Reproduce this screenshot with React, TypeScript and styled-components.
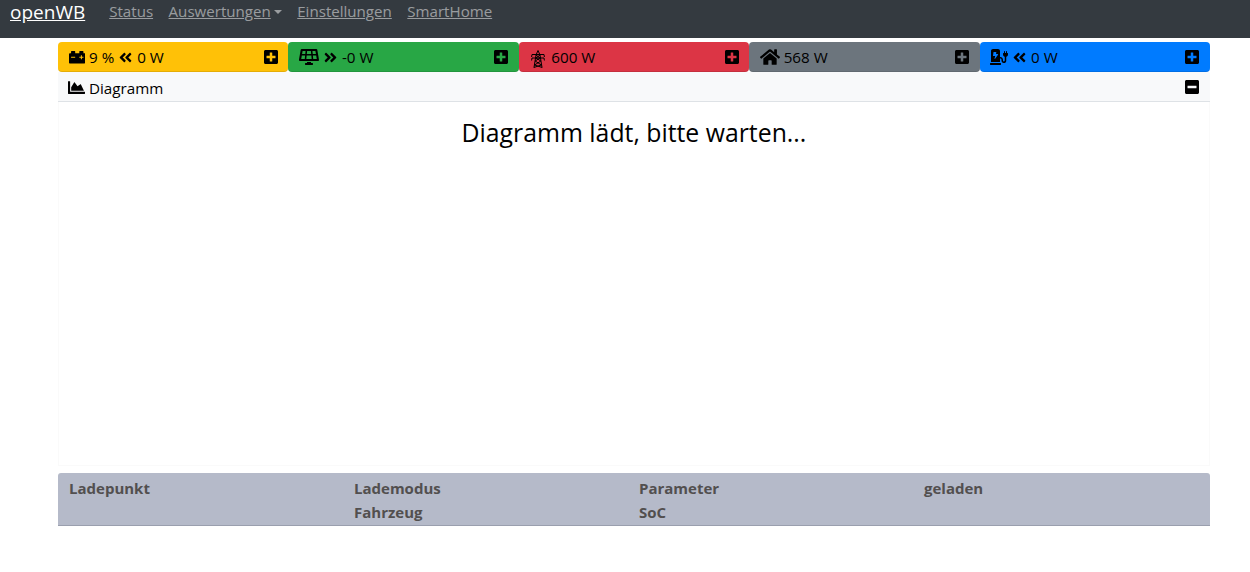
import React from "react";
import styled, { createGlobalStyle } from "styled-components";
import {
  FaAngleDoubleLeft,
  FaAngleDoubleRight,
  FaCarBattery,
  FaChargingStation,
  FaChartArea,
  FaHome,
  FaMinusSquare,
  FaPlusSquare,
  FaSolarPanel,
} from "react-icons/fa";

const PylonIcon: React.FC = () => (
  <svg width="18" height="18" viewBox="0 0 18 18" fill="none" stroke="#000" strokeWidth="1" style={{ marginTop: 3 }}>
    <path d="M9 0.5 L7 5 L5 17.5 M9 0.5 L11 5 L13 17.5" />
    <path d="M3 4.5 L15 4.5 M3 8 L15 8 M7 5 L11 8 L6.2 11 L12.4 15 L4.8 17.5 M11 5 L7 8 L11.8 11 L5.6 15 L13.2 17.5" />
    <path d="M3 4.5 L2.6 7 M15 4.5 L15.4 7 M3 8 L2.6 10.5 M15 8 L15.4 10.5" />
  </svg>
);

interface TileData {
  color: string;
  icon: React.ReactNode;
  arrow?: React.ReactNode;
  text: string;
}

const tiles: TileData[] = [
  { color: "#ffc107", icon: <FaCarBattery size={16.5} />, text: "9 %", arrow: <FaAngleDoubleLeft size={15} /> },
  { color: "#28a745", icon: <FaSolarPanel size={20} />, arrow: <FaAngleDoubleRight size={15} />, text: "-0 W" },
  { color: "#dc3545", icon: <PylonIcon />, text: "600 W" },
  { color: "#6c757d", icon: <FaHome size={20} />, text: "568 W" },
  { color: "#007bff", icon: <FaChargingStation size={18} />, arrow: <FaAngleDoubleLeft size={15} />, text: "0 W" },
];

const App: React.FC = () => (
  <>
    <GlobalStyle />
    <Navbar>
      <Brand href="#">openWB</Brand>
      <NavLink href="#">Status</NavLink>
      <NavLink href="#">
        Auswertungen
        <Caret />
      </NavLink>
      <NavLink href="#">Einstellungen</NavLink>
      <NavLink href="#">SmartHome</NavLink>
    </Navbar>
    <Container>
      <TileRow>
        {tiles.map((tile, i) => (
          <Tile key={i} color={tile.color}>
            <TileLabel>
              {tile.icon}
              {i === 0 ? (
                <>
                  <span>{tile.text}</span>
                  {tile.arrow}
                  <span>0 W</span>
                </>
              ) : (
                <>
                  {tile.arrow}
                  <span>{tile.text}</span>
                </>
              )}
            </TileLabel>
            <FaPlusSquare size={16} />
          </Tile>
        ))}
      </TileRow>
      <ChartHeader>
        <TileLabel>
          <FaChartArea size={17} />
          <span>Diagramm</span>
        </TileLabel>
        <FaMinusSquare size={16} />
      </ChartHeader>
      <ChartBody>
        <ChartMessage>Diagramm lädt, bitte warten...</ChartMessage>
      </ChartBody>
      <ChargeTable>
        <HeadCell>Ladepunkt</HeadCell>
        <HeadCell>
          Lademodus
          <br />
          Fahrzeug
        </HeadCell>
        <HeadCell>
          Parameter
          <br />
          SoC
        </HeadCell>
        <HeadCell>geladen</HeadCell>
      </ChargeTable>
    </Container>
  </>
);

export default App;

const GlobalStyle = createGlobalStyle`
  html, body {
    margin: 0;
    background: #fff;
    font-family: "Open Sans", "Noto Sans", sans-serif;
    color: #000;
  }
`;

const Navbar = styled.nav`
  display: flex;
  align-items: flex-start;
  height: 38px;
  padding: 0 10px;
  box-sizing: border-box;
  background: #343a40;
`;

const Brand = styled.a`
  margin-right: 24px;
  font-size: 19px;
  line-height: 25px;
  color: #fff;
  text-decoration: underline;
`;

const NavLink = styled.a`
  margin-right: 15.5px;
  font-size: 15.1px;
  line-height: 23px;
  color: rgba(255, 255, 255, 0.5);
  text-decoration: underline;
`;

const Caret = styled.span`
  display: inline-block;
  margin-left: 3px;
  vertical-align: 3px;
  border-top: 4px solid rgba(255, 255, 255, 0.5);
  border-left: 4px solid transparent;
  border-right: 4px solid transparent;
`;

const Container = styled.main`
  width: 1152px;
  margin: 4px 0 0 58px;
`;

const TileRow = styled.div`
  display: grid;
  grid-template-columns: repeat(5, 1fr);
  height: 30px;
`;

const Tile = styled.div<{ color: string }>`
  display: flex;
  align-items: center;
  justify-content: space-between;
  padding: 0 9.5px 0 10.5px;
  background: ${({ color }) => color};
  border-radius: 4px;
  border-bottom: 1px solid rgba(0, 0, 0, 0.1);
  box-sizing: border-box;
`;

const TileLabel = styled.div`
  display: flex;
  align-items: center;
  gap: 4px;
  padding-top: 1px;
  font-size: 15.2px;
  line-height: 20px;
`;

const ChartHeader = styled.div`
  display: flex;
  align-items: center;
  justify-content: space-between;
  height: 30px;
  padding: 1px 10px 0;
  box-sizing: border-box;
  background: #f8f9fa;
  border-bottom: 1px solid #dee2e6;
`;

const ChartBody = styled.div`
  height: 364px;
  border: 1px solid #fafafa;
  border-top: none;
  box-sizing: border-box;
  text-align: center;
`;

const ChartMessage = styled.div`
  padding-top: 15px;
  font-size: 24.8px;
  line-height: 31px;
`;

const ChargeTable = styled.div`
  display: grid;
  grid-template-columns: repeat(4, 285px) 1fr;
  height: 53px;
  margin-top: 7px;
  padding: 3px 10px 3px 11px;
  box-sizing: border-box;
  background: #b5bac9;
  border-radius: 3px 3px 0 0;
  border-bottom: 1px solid #9a9fae;
`;

const HeadCell = styled.div`
  font-size: 15px;
  font-weight: 700;
  line-height: 24px;
  color: #524f4f;
`;
